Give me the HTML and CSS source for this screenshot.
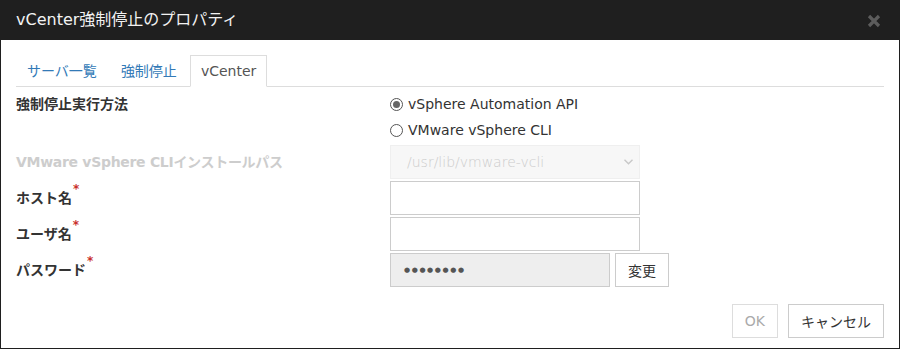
FILE: index.html
```html
<!DOCTYPE html>
<html lang="ja">

<head>
    <meta charset="UTF-8">
    <meta name="viewport" content="width=device-width, initial-scale=1.0">
    <title>vCenter強制停止のプロパティ</title>
    <link rel="stylesheet" href="styles.css">
</head>

<body>

    <div class="dialog">
        <div class="titlebar">
            <span class="title">vCenter強制停止のプロパティ</span>
            <span class="close">
                <svg width="14" height="14" viewBox="0 0 14 14">
                    <path d="M2 2 L12 12 M12 2 L2 12" stroke="#5c5c5c" stroke-width="3.2" stroke-linecap="butt" fill="none" />
                </svg>
            </span>
        </div>

        <div class="dialog-body">
            <ul class="tabs">
                <li class="tab"><a>サーバ一覧</a></li>
                <li class="tab"><a>強制停止</a></li>
                <li class="tab active"><a>vCenter</a></li>
            </ul>

            <div class="form">
                <div class="label top">強制停止実行方法</div>
                <div class="radios">
                    <label class="radio"><span class="radio-mark checked"></span>vSphere Automation API</label>
                    <label class="radio"><span class="radio-mark"></span>VMware vSphere CLI</label>
                </div>

                <div class="label disabled">VMware vSphere CLIインストールパス</div>
                <div class="select disabled">
                    <span>/usr/lib/vmware-vcli</span>
                    <svg width="9" height="6" viewBox="0 0 9 6">
                        <path d="M0.5 0.8 L4.5 4.8 L8.5 0.8" stroke="#c8c8c8" stroke-width="1.4" fill="none" />
                    </svg>
                </div>

                <div class="label">ホスト名<span class="req">*</span></div>
                <div><input class="field" type="text"></div>

                <div class="label">ユーザ名<span class="req">*</span></div>
                <div><input class="field" type="text"></div>

                <div class="label">パスワード<span class="req">*</span></div>
                <div class="pwd-row">
                    <div class="field pwd">&#9679;&#9679;&#9679;&#9679;&#9679;&#9679;&#9679;&#9679;</div>
                    <button class="btn">変更</button>
                </div>
            </div>

            <div class="footer">
                <button class="btn" disabled>OK</button>
                <button class="btn">キャンセル</button>
            </div>
        </div>
    </div>

</body>

</html>
```

FILE: styles.css
```css
body {
    margin: 0;
    background-color: white;
    font-family: "DejaVu Sans", "Noto Sans CJK JP", sans-serif;
    font-size: 14px;
    color: #333;
}

.dialog {
    width: 900px;
    height: 349px;
    box-sizing: border-box;
    border: 1px solid #1f1f1f;
    border-top: none;
    background: white;
}

.titlebar {
    height: 40px;
    margin: 0 -1px;
    padding: 0 19px 0 16px;
    background-color: #1f1f1f;
    color: #f2f2f2;
    display: flex;
    align-items: center;
    justify-content: space-between;
}

.title {
    font-size: 16px;
    line-height: 20px;
}

.close {
    display: flex;
    margin-top: 1px;
}

.dialog-body {
    padding: 15px 15px 0 15px;
}

/* tabs */

.tabs {
    list-style: none;
    margin: 0;
    padding: 0;
    display: flex;
    border-bottom: 1px solid #ddd;
}

.tab {
    margin-right: 2px;
    margin-bottom: -1px;
}

.tab a {
    display: block;
    padding: 0 10px;
    line-height: 30px;
    border: 1px solid transparent;
    color: #337ab7;
}

.tab.active a {
    color: #555;
    background: white;
    border-color: #ddd #ddd transparent #ddd;
}

/* form */

.form {
    margin-top: 4px;
    display: grid;
    grid-template-columns: 374px 1fr;
    row-gap: 2px;
}

.label {
    font-weight: bold;
    line-height: 20px;
    display: flex;
    align-items: center;
}

.label.top {
    align-items: flex-start;
    padding-top: 3px;
}

.label.disabled {
    color: #cdcdcd;
    letter-spacing: -0.3px;
}

.req {
    color: #c9302c;
    font-size: 12px;
    align-self: flex-start;
    margin-top: -2px;
    margin-left: 1px;
}

.radios {
    display: flex;
    flex-direction: column;
}

.radio {
    height: 26px;
    display: flex;
    align-items: center;
    line-height: 20px;
}

.radio-mark {
    width: 11px;
    height: 11px;
    border: 1px solid #555;
    border-radius: 50%;
    margin-right: 5px;
    display: flex;
    align-items: center;
    justify-content: center;
}

.radio-mark.checked::after {
    content: "";
    width: 7px;
    height: 7px;
    border-radius: 50%;
    background: #666;
}

.select,
.field {
    width: 250px;
    height: 34px;
    box-sizing: border-box;
    border: 1px solid #ccc;
    background: white;
    font: inherit;
    margin: 0;
    padding: 0 12px;
}

.select {
    display: flex;
    align-items: center;
    justify-content: space-between;
    padding: 0 6px 0 16px;
}

.select.disabled {
    background: #f7f7f7;
    border-color: #efefef;
    color: #cccccc;
    font-weight: 300;
}

.pwd-row {
    display: flex;
    gap: 5px;
}

.pwd {
    width: 220px;
    background: #eeeeee;
    display: flex;
    align-items: center;
    padding-left: 13px;
    font-size: 7px;
    letter-spacing: 1.6px;
    color: #555;
}

.btn {
    height: 34px;
    box-sizing: border-box;
    padding: 0 12px;
    border: 1px solid #ccc;
    background: white;
    color: #333;
    font: inherit;
    cursor: pointer;
}

.btn:disabled {
    color: #aaa;
    border-color: #ddd;
    cursor: default;
}

.footer {
    margin-top: 17px;
    display: flex;
    justify-content: flex-end;
    gap: 10px;
}
```
